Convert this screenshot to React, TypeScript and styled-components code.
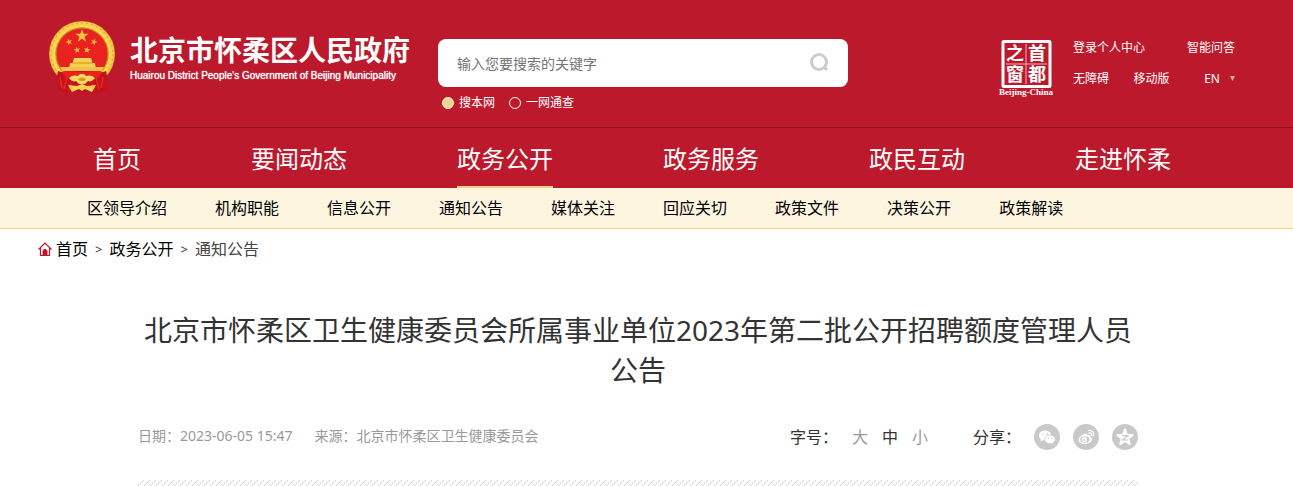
import React from "react";
import styled, { createGlobalStyle, css } from "styled-components";

const GlobalStyle = createGlobalStyle`
  * { box-sizing: border-box; }
  body {
    margin: 0;
    background: #fff;
    color: #000;
    font-family: "Noto Sans", "Noto Sans CJK SC", sans-serif;
    font-size: 16px;
  }
  a { color: inherit; text-decoration: none; }
  ul { list-style: none; margin: 0; padding: 0; }
`;

const Band = styled.div`
  padding-right: 17px;
`;
const Container = styled.div`
  max-width: 1200px;
  margin: 0 auto;
`;

const HeaderBand = styled(Band).attrs({ as: "header" })`
  background: #bc1a2c;
  border-bottom: 1px solid #8f0d1c;
`;
const HeaderRow = styled(Container)`
  display: flex;
  align-items: flex-start;
  height: 127px;
`;
const Brand = styled.a`
  display: flex;
  width: 400px;
  padding: 20px 0 0 10px;
  color: #fff;
`;
const BrandText = styled.span`
  display: flex;
  flex-direction: column;
  padding: 11px 0 0 14px;
  white-space: nowrap;
`;
const BrandName = styled.strong`
  font: 700 28px/36px "Noto Sans CJK SC", sans-serif;
`;
const BrandSub = styled.span`
  font: 400 10px/18px "Liberation Sans", sans-serif;
  text-shadow: 0 0 1px #fff;
`;

const SearchForm = styled.form`
  width: 410px;
  padding-top: 39px;
`;
const SearchBox = styled.div`
  display: flex;
  height: 48px;
  border-radius: 8px;
  background: #fff;
  overflow: hidden;
`;
const SearchInput = styled.input`
  flex: 1;
  min-width: 0;
  border: 0;
  outline: 0;
  padding: 0 0 0 19px;
  background: none;
  font: inherit;
  font-size: 14px;
  &::placeholder { color: #757575; }
`;
const SearchButton = styled.button`
  display: flex;
  align-items: center;
  justify-content: center;
  width: 56px;
  padding: 0;
  border: 0;
  background: none;
`;
const Scope = styled.div`
  display: flex;
  gap: 14px;
  padding: 7px 0 0 4px;
`;
const ScopeLabel = styled.label`
  display: flex;
  align-items: center;
  gap: 5px;
  color: #fff;
  font-size: 12px;
  line-height: 18px;
`;
const Radio = styled.input`
  appearance: none;
  width: 12px;
  height: 12px;
  margin: 0;
  border: 1px solid #fff;
  border-radius: 50%;
  &:checked { background: #f7d488; }
`;

const CapitalLink = styled.a`
  margin: 38px 18px 0 auto;
  line-height: 0;
`;
const Tools = styled.div`
  display: flex;
  flex-direction: column;
  gap: 12px;
  width: 165px;
  padding-top: 38px;
  color: #fff;
  font-size: 12px;
  line-height: 19px;
  white-space: nowrap;
`;
const ToolRow = styled.div`
  display: flex;
  justify-content: space-between;
  padding-right: 3px;
`;
const Language = styled.button`
  display: flex;
  align-items: center;
  gap: 10px;
  padding: 0;
  margin-left: 10px;
  border: 0;
  background: none;
  color: inherit;
  font: inherit;
`;

const NavBand = styled(Band).attrs({ as: "nav" })`
  background: #bc1a2c;
`;
const NavList = styled(Container).attrs({ as: "ul" })`
  display: flex;
  height: 60px;
`;
const NavItem = styled.li`
  padding: 0 55px;
`;
const NavLink = styled.a<{ $active?: boolean }>`
  display: block;
  height: 60px;
  color: #fff;
  font-size: 24px;
  line-height: 62px;
  white-space: nowrap;
  ${(p) => p.$active && css`border-bottom: 2px solid #f6cf85;`}
`;

const SubBand = styled(Band).attrs({ as: "nav" })`
  background: #fef5e0;
  border-bottom: 1px solid #f6cf85;
`;
const SubList = styled(Container).attrs({ as: "ul" })`
  display: flex;
  gap: 48px;
  padding-left: 49px;
  line-height: 40px;
  white-space: nowrap;
`;

const Crumbs = styled(Container).attrs({ as: "nav" })`
  display: flex;
  align-items: center;
  gap: 7px;
  line-height: 40px;
`;
const HomeLink = styled.a`
  display: flex;
  align-items: center;
  gap: 4px;
`;
const Arrow = styled.span`
  font-size: 13px;
  color: #333;
`;
const Current = styled.span`
  color: #444;
`;

const Article = styled.article`
  max-width: 1000px;
  margin: 0 auto;
  padding-top: 41px;
`;
const Title = styled.h1`
  margin: 0;
  color: #333;
  font-size: 28px;
  font-weight: 400;
  line-height: 40px;
  text-align: center;
`;
const Meta = styled.div`
  display: flex;
  align-items: center;
  height: 30px;
  margin-top: 32px;
  color: #999;
  font-size: 14px;
`;
const Facts = styled.div`
  display: flex;
  gap: 22px;
  padding-bottom: 4px;
`;
const SizeGroup = styled.div`
  display: flex;
  align-items: center;
  gap: 14px;
  margin-left: auto;
  padding-bottom: 2px;
  font-size: 16px;
`;
const MetaLabel = styled.span`
  color: #333;
`;
const SizeButton = styled.button<{ $active?: boolean }>`
  padding: 0;
  border: 0;
  background: none;
  font: inherit;
  color: ${(p) => (p.$active ? "#333" : "#999")};
`;
const ShareGroup = styled.div`
  display: flex;
  align-items: center;
  gap: 13px;
  margin-left: 45px;
  font-size: 16px;
`;
const ShareLabel = styled(MetaLabel)`
  padding-bottom: 2px;
`;
const ShareLink = styled.a`
  display: block;
  line-height: 0;
`;
const Hatch = styled.div`
  height: 6px;
  margin-top: 28px;
  background: linear-gradient(135deg, transparent 42%, #d4d4d4 42% 58%, transparent 58%) 0 0 / 6px 6px;
`;

const STAR = "M0-1 .23-.31.95-.31.37.12.59.81 0 .39-.59.81-.37.12-.95-.31-.23-.31Z";

function Emblem() {
  return (
    <svg width="68" height="74" viewBox="0 0 68 74" aria-hidden="true">
      <circle cx="34" cy="34" r="33" fill="#e3a72c" />
      <circle cx="34" cy="34" r="29.500" fill="none" stroke="#f7cf4a" strokeWidth="5.500" />
      <circle cx="34" cy="34" r="31" fill="none" stroke="#e6ad34" strokeWidth="1.500" strokeDasharray="2 3" />
      <circle cx="34" cy="34" r="28" fill="none" stroke="#fbe071" strokeWidth="1.500" strokeDasharray="3 2" />
      <circle cx="34" cy="34" r="26" fill="#e8231f" stroke="#c98a1c" />
      <path d={STAR} transform="translate(34 16) scale(7)" fill="#f5c445" />
      {[[21, 22, -20], [46, 22, 20], [29, 30, -10], [39, 30, 10]].map(([x, y, r]) => (
        <path key={x} d={STAR} transform={`translate(${x} ${y}) rotate(${r}) scale(3.600)`} fill="#f2b640" />
      ))}
      <path d="M26 38h17l1 3H25Zm-1 3h19v2H25Zm-3 2h25l1 6H21Z" fill="#f8cf55" />
      <path d="M24 43h21" stroke="#d98f26" />
      <path d="M12 47h44l-2 4H14Z" fill="#f3c14a" />
      <path d="M10 51c8 3 14 0 24 0s16 3 24 0l2 11-2 8-8 3-8-2-8 2-8-2-8 2-8-3-2-8Z" fill="#c5121b" />
      <path d="M14 52h40l-4 6H18Z" fill="#e8231f" />
      <path d="m12 57 2 11m5-10-3 11m7-6-2 7m34-13-2 11m-5-10 3 11m-7-6 2 7" stroke="#e02a24" strokeWidth="1.500" />
      <path d="M21 58c3-3 6-3 9-2 2-3 6-3 8 0 3-1 6-1 9 2-2 3-5 4-7 3l-3 3h-6l-3-3c-2 1-5 0-7-3Z" fill="#f7d95f" />
      <path d="M30 59q4-3 8 0l-2 2h-4Z" fill="#d9952a" />
      <path d="m20 65 9 1 5-2 5 2 9-1-4 7-7-3-3 2-3-2-7 3Z" fill="#f5d24f" />
    </svg>
  );
}

function SearchIcon() {
  return (
    <svg width="20" height="20" viewBox="0 0 20 20" fill="none" stroke="#ccc" strokeWidth="3" aria-hidden="true">
      <circle cx="9" cy="9" r="7.500" />
      <path d="m14 14 3 3" />
    </svg>
  );
}

function CapitalLogo() {
  return (
    <svg width="56" height="60" viewBox="0 0 56 60" fill="#fff" aria-hidden="true">
      <rect x="4" y="3.500" width="47" height="45" rx="1" fill="none" stroke="#fff" strokeWidth="3" />
      <path d="M27 6v40M7 26h41" stroke="#eeb0b6" strokeWidth="1" />
      <g fontFamily="'Liberation Sans','Noto Sans CJK SC',sans-serif" fontWeight="700" fontSize="18" textAnchor="middle">
        <text x="16" y="22">之</text>
        <text x="38" y="22">首</text>
        <text x="16" y="43">窗</text>
        <text x="38" y="43">都</text>
      </g>
      <text x="27" y="57" fontFamily="'Liberation Serif',serif" fontWeight="700" fontSize="9" textAnchor="middle">Beijing-China</text>
    </svg>
  );
}

function HomeIcon() {
  return (
    <svg width="14" height="14" viewBox="0 0 14 14" fill="none" stroke="#bc1a2c" aria-hidden="true">
      <path d="M0.500 7.500 7 1l6.500 6.500M2.500 6v7.500h9V6" strokeWidth="1.200" />
      <path d="M5 13V8.500l2-1.500 2 1.500V13Z" fill="#bc1a2c" />
    </svg>
  );
}

function ShareIcon({ kind }: { kind: string }) {
  return (
    <svg width="26" height="26" viewBox="0 0 26 26" fill="#fff" aria-hidden="true">
      <circle cx="13" cy="13" r="13" fill="#c9c9c9" />
      {kind === "wechat" && (
        <>
          <path d="M11 6.500c-3.500 0-6 2.200-6 5 0 1.600.8 2.900 2 3.800l-.5 2.200 2.400-1.300 2.100.3c3.500 0 6-2.200 6-5s-2.500-5-6-5Z" />
          <path d="M16 11c-3 0-5.300 1.900-5.300 4.300s2.300 4.300 5.300 4.300l1.800-.2 2.100 1.100-.5-1.900c1.200-.8 1.900-2 1.900-3.300 0-2.400-2.300-4.300-5.300-4.300Z" stroke="#c9c9c9" strokeWidth=".8" />
          <g fill="#c9c9c9">
            <circle cx="9" cy="10" r=".8" /><circle cx="13" cy="10" r=".8" />
            <circle cx="14.300" cy="14.300" r=".7" /><circle cx="17.800" cy="14.300" r=".7" />
          </g>
        </>
      )}
      {kind === "weibo" && (
        <>
          <path d="M11 10c1.500-.7 3.300-.7 3.300 1.300 2-.6 3.600 0 3 1.700 1 .3 1.700 1 1.700 2.200 0 2.600-3.400 4.800-7.200 4.800S5.500 18.300 5.500 16c0-2 2.500-4.800 5.500-6Z" />
          <ellipse cx="11.800" cy="15.500" rx="4.600" ry="3.200" fill="#c9c9c9" />
          <circle cx="11.300" cy="15.500" r="2.600" />
          <circle cx="10.900" cy="16" r=".9" fill="#c9c9c9" />
          <path d="M15.500 6.500c3.600-.6 6 2.200 5 5.500M16 9c1.900-.3 3 1 2.500 2.700" fill="none" stroke="#fff" strokeWidth="1.300" strokeLinecap="round" />
        </>
      )}
      {kind === "qzone" && (
        <>
          <path d={STAR} transform="translate(13 13.500) scale(7.800)" stroke="#fff" strokeWidth=".3" strokeLinejoin="round" />
          <path d="M9.800 11.500h6l-5.300 4.500h6" fill="none" stroke="#c9c9c9" strokeWidth="1.200" />
        </>
      )}
    </svg>
  );
}

const navItems = ["首页", "要闻动态", "政务公开", "政务服务", "政民互动", "走进怀柔"];
const subItems = ["区领导介绍", "机构职能", "信息公开", "通知公告", "媒体关注", "回应关切", "政策文件", "决策公开", "政策解读"];
const shares = [["wechat", "微信"], ["weibo", "微博"], ["qzone", "QQ空间"]];

export default function App() {
  return (
    <>
      <GlobalStyle />
      <HeaderBand>
        <HeaderRow>
          <Brand href="#">
            <Emblem />
            <BrandText>
              <BrandName>北京市怀柔区人民政府</BrandName>
              <BrandSub>Huairou District People's Government of Beijing Municipality</BrandSub>
            </BrandText>
          </Brand>
          <SearchForm>
            <SearchBox>
              <SearchInput type="text" placeholder="输入您要搜索的关键字" aria-label="搜索" />
              <SearchButton type="button" aria-label="搜索"><SearchIcon /></SearchButton>
            </SearchBox>
            <Scope>
              <ScopeLabel><Radio type="radio" name="scope" defaultChecked />搜本网</ScopeLabel>
              <ScopeLabel><Radio type="radio" name="scope" />一网通查</ScopeLabel>
            </Scope>
          </SearchForm>
          <CapitalLink href="#" aria-label="首都之窗"><CapitalLogo /></CapitalLink>
          <Tools>
            <ToolRow>
              <a href="#">登录个人中心</a>
              <a href="#">智能问答</a>
            </ToolRow>
            <ToolRow>
              <a href="#">无障碍</a>
              <a href="#">移动版</a>
              <Language type="button">
                EN
                <svg width="5" height="5" viewBox="0 0 5 5" aria-hidden="true"><path d="M0 0h5L2.500 5Z" fill="#e0b080" /></svg>
              </Language>
            </ToolRow>
          </Tools>
        </HeaderRow>
      </HeaderBand>
      <NavBand>
        <NavList>
          {navItems.map((t) => (
            <NavItem key={t}><NavLink href="#" $active={t === "政务公开"}>{t}</NavLink></NavItem>
          ))}
        </NavList>
      </NavBand>
      <SubBand>
        <SubList>
          {subItems.map((t) => <li key={t}><a href="#">{t}</a></li>)}
        </SubList>
      </SubBand>
      <Band>
        <Crumbs>
          <HomeLink href="#"><HomeIcon />首页</HomeLink>
          <Arrow>&gt;</Arrow>
          <a href="#">政务公开</a>
          <Arrow>&gt;</Arrow>
          <Current>通知公告</Current>
        </Crumbs>
        <Article>
          <Title>北京市怀柔区卫生健康委员会所属事业单位2023年第二批公开招聘额度管理人员公告</Title>
          <Meta>
            <Facts>
              <span>日期：2023-06-05 15:47</span>
              <span>来源：北京市怀柔区卫生健康委员会</span>
            </Facts>
            <SizeGroup>
              <MetaLabel>字号：</MetaLabel>
              <SizeButton type="button">大</SizeButton>
              <SizeButton type="button" $active>中</SizeButton>
              <SizeButton type="button">小</SizeButton>
            </SizeGroup>
            <ShareGroup>
              <ShareLabel>分享：</ShareLabel>
              {shares.map(([kind, label]) => (
                <ShareLink key={kind} href="#" aria-label={label}><ShareIcon kind={kind} /></ShareLink>
              ))}
            </ShareGroup>
          </Meta>
          <Hatch />
        </Article>
      </Band>
    </>
  );
}
